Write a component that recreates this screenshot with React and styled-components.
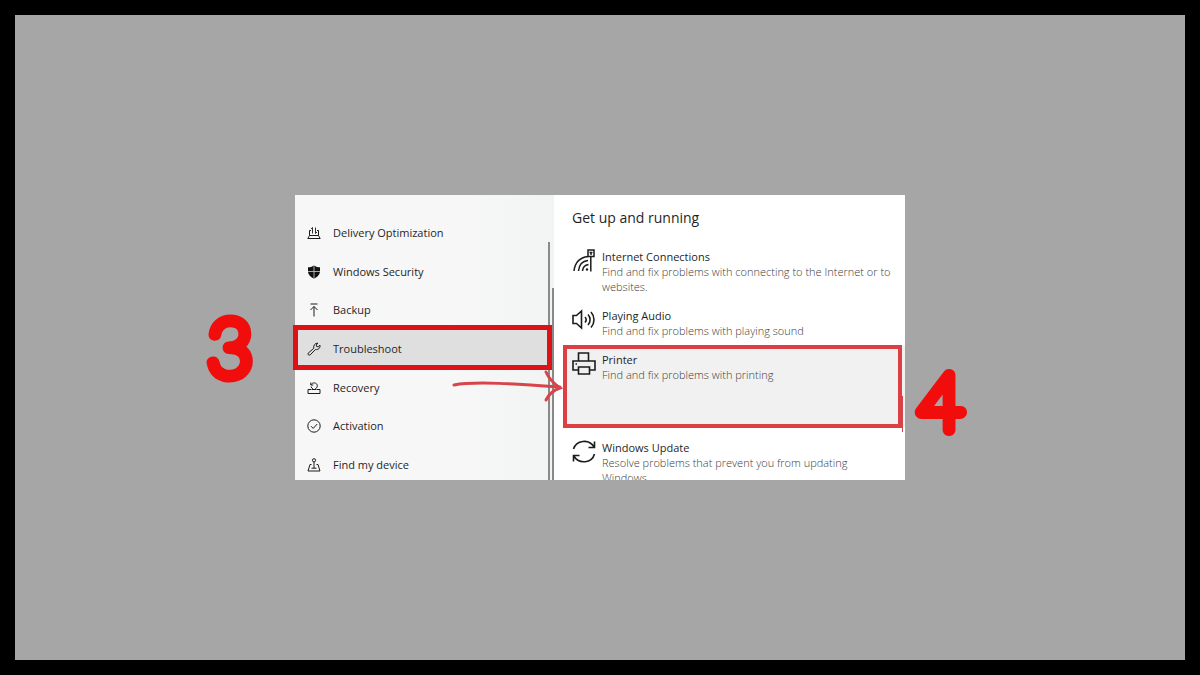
import React from 'react';
import styled, { createGlobalStyle } from 'styled-components';

const GlobalStyle = createGlobalStyle`
  * {
    box-sizing: border-box;
  }

  body {
    margin: 0;
    font-family: 'Open Sans', 'Noto Sans', sans-serif;
    color: #1f1f1f;
  }
`;

const Frame = styled.main`
  min-height: 100vh;
  display: flex;
  align-items: center;
  justify-content: center;
  border: 15px solid #000;
  background: #a6a6a6;
`;

const Figure = styled.div`
  position: relative;
  width: 100%;
  max-width: 610px;
  aspect-ratio: 610 / 285;
`;

const Settings = styled.div`
  display: grid;
  grid-template-columns: minmax(0, 259px) minmax(0, 1fr);
  grid-template-rows: minmax(0, 1fr);
  height: 100%;
  overflow: hidden;
  background: #fff;
`;

const Sidebar = styled.nav`
  display: flex;
  position: relative;
  padding-top: 19px;
  background: linear-gradient(90deg, #f7f7f7 60%, #f2f4f4);
`;

const NavList = styled.ul`
  flex: 1;
  display: grid;
  grid-template-rows: repeat(7, minmax(0, 1fr));
  margin: 0 0 -4px;
  padding: 0;
  list-style: none;
`;

const NavLink = styled.a`
  display: flex;
  align-items: center;
  gap: 12px;
  height: 100%;
  padding-left: 12px;
  font-size: 11px;
  line-height: 16px;
  color: #1f1f1f;
  text-decoration: none;
  background: ${({ $active }) => ($active ? '#dfdfdf' : 'transparent')};

  svg {
    width: 14px;
    height: 14px;
    flex: none;
  }
`;

const Rail = styled.span`
  position: absolute;
  top: ${({ $top }) => $top}px;
  right: ${({ $right }) => $right}px;
  bottom: 0;
  width: 2px;
  background: #8a8a8a;
`;

const Content = styled.section`
  padding: 12px 0 0 9px;
`;

const Title = styled.h1`
  margin: 0 0 13px;
  padding-left: 9px;
  font-size: 14px;
  line-height: 22px;
  font-weight: 400;
`;

const ToolList = styled.ul`
  display: grid;
  margin: 0;
  padding: 0;
  list-style: none;
`;

const ToolButton = styled.button`
  display: flex;
  align-items: flex-start;
  gap: 6px;
  width: 100%;
  min-height: ${({ $open }) => ($open ? '82px' : '0')};
  margin-bottom: ${({ $open }) => ($open ? '6px' : '0')};
  padding: 7px 12px 7px 9px;
  border: 0;
  font: inherit;
  font-size: 11px;
  font-weight: 300;
  line-height: 15px;
  text-align: left;
  color: #3c3c3c;
  background: ${({ $open }) => ($open ? '#f1f1f1' : 'transparent')};

  svg {
    width: 24px;
    height: 24px;
    flex: none;
  }
`;

const ToolName = styled.span`
  display: block;
  font-weight: 400;
  color: #1f1f1f;
`;

const Ring = styled.span`
  position: absolute;
  left: ${({ $left }) => $left}px;
  top: ${({ $top }) => $top}px;
  width: ${({ $width }) => $width}px;
  height: ${({ $height }) => $height}px;
  border: ${({ $line }) => $line}px solid ${({ $color }) => $color};
  pointer-events: none;
`;

const Arrow = styled.svg`
  position: absolute;
  left: 157px;
  top: 174px;
  width: 112px;
  height: 36px;
`;

const ScrollMark = styled.span`
  position: absolute;
  top: 201px;
  right: 2px;
  width: 1px;
  height: 36px;
  background: #c9494c;
`;

const Step = styled.svg`
  position: absolute;
  top: ${({ $top }) => $top}px;
  left: ${({ $left }) => $left}px;
  width: 72px;
  height: 84px;
  overflow: visible;

  text {
    font-family: Lato, sans-serif;
    font-size: 78px;
    font-weight: 100;
    text-anchor: middle;
    fill: #f20d0d;
    stroke: #f20d0d;
    stroke-width: 12px;
    stroke-linejoin: round;
  }
`;

const Icon = ({ size = 14, line = 1, children }) => (
  <svg
    viewBox={`0 0 ${size} ${size}`}
    fill="none"
    stroke="#1c1c1c"
    strokeWidth={line}
    aria-hidden="true"
  >
    {children}
  </svg>
);

const navItems = [
  {
    label: 'Delivery Optimization',
    icon: (
      <Icon>
        <path d="M4 4.500H2.500V9.500M10 4.500h1.500V9.500M2.500 9.500h9l1.700 3H.8z" />
        <path d="M5.500 7.500V1.500M4 3L5.500 1.500M8.500 1.500v6M8.500 7.500L10 6" strokeWidth=".9" />
      </Icon>
    ),
  },
  {
    label: 'Windows Security',
    icon: (
      <Icon>
        <path d="M7 .5c2 1.300 4 1.800 6 1.800v3.700c0 3.500-2.500 6-6 7.500-3.500-1.500-6-4-6-7.500V2.300c2 0 4-.5 6-1.800z" fill="#111" stroke="none" />
        <path d="M7 1v12M1 6.500h12" stroke="#bbb" strokeWidth=".9" />
      </Icon>
    ),
  },
  {
    label: 'Backup',
    icon: (
      <Icon>
        <path d="M3.500 1h7M7 13.500V3.500M3.500 7L7 3.500 10.500 7" />
      </Icon>
    ),
  },
  {
    label: 'Troubleshoot',
    active: true,
    icon: (
      <Icon>
        <path d="M1.200 11.200L6.800 6.200C6.200 3.500 8 1 10.800 1.100L9.300 3l.4 1.500 1.600.3L13 3.200c.5 2.800-2 5-4.600 4.300l-5.200 5.400c-1.300.9-2.900-.5-2-1.700z" />
      </Icon>
    ),
  },
  {
    label: 'Recovery',
    icon: (
      <Icon>
        <path d="M4.500 8.500H1v4h12v-4H9.500M5 8.500h4" />
        <path d="M3.800 1.500V4h2.500M4 3.800c1.500-3 6.300-2.300 6.300 1 0 1.700-1 2.700-2.300 3.200M4 5.500C4.200 6.700 5 7.500 6 8" />
      </Icon>
    ),
  },
  {
    label: 'Activation',
    icon: (
      <Icon>
        <circle cx="7" cy="7" r="6.200" />
        <path d="M4 7.200l2.200 2.200L10.200 5" />
      </Icon>
    ),
  },
  {
    label: 'Find my device',
    icon: (
      <Icon>
        <circle cx="7" cy="2.300" r="1.600" />
        <path d="M7 4v6M4.500 6.500H3L1 13h12l-2-6.500H9.500M4.500 10.200h5" />
      </Icon>
    ),
  },
];

const tools = [
  {
    name: 'Internet Connections',
    text: 'Find and fix problems with connecting to the Internet or to websites.',
    icon: (
      <Icon size={24} line={1.5}>
        <path d="M2 22C3 13 8 8.500 16 7.500M6.500 22c.5-6 4-10 9.500-10.500M10.500 22c.3-3.500 2.500-6 6-6.500M18.800 22.500V7" />
        <circle cx="15" cy="20.500" r="1.200" fill="#1c1c1c" stroke="none" />
        <path d="M16 1h6v6.500h-6zM17.500 3.500h3M19 3.500v2.500" />
      </Icon>
    ),
  },
  {
    name: 'Playing Audio',
    text: 'Find and fix problems with playing sound',
    icon: (
      <Icon size={24} line={1.6}>
        <path d="M1 7.500h3.500L9.500 3v17l-5-4.500H1zM13 9c1.300 1.500 1.300 4 0 5.500M16 6.500c2.800 3 2.800 7.500 0 10.500M19 4c4 4.500 4 11 0 15.500" />
      </Icon>
    ),
  },
  {
    name: 'Printer',
    text: 'Find and fix problems with printing',
    open: true,
    icon: (
      <Icon size={24} line={1.6}>
        <path d="M6.500 9V1h10v8M6.500 18H1V9h22v9h-5.500M6.500 15h11v7h-11zM3.500 12h1.500" />
      </Icon>
    ),
  },
  {
    name: 'Windows Update',
    text: 'Resolve problems that prevent you from updating Windows.',
    icon: (
      <Icon size={24} line={1.6}>
        <path d="M1.500 9C4 .5 17-2 22.500 7.500M22.500 1.500v6h-6M22.500 14C20 23 7 25 1.500 15.500M1.500 21.500v-6h6" />
      </Icon>
    ),
  },
];

const App = () => (
  <>
    <GlobalStyle />
    <Frame>
      <Figure>
        <Settings>
          <Sidebar>
            <NavList>
              {navItems.map(({ label, icon, active }) => (
                <li key={label}>
                  <NavLink href="#" $active={active}>
                    {icon}
                    {label}
                  </NavLink>
                </li>
              ))}
            </NavList>
            <Rail $top={47} $right={4} />
            <Rail $top={93} $right={0} />
          </Sidebar>
          <Content>
            <Title>Get up and running</Title>
            <ToolList>
              {tools.map(({ name, text, icon, open }) => (
                <li key={name}>
                  <ToolButton type="button" $open={open}>
                    {icon}
                    <span>
                      <ToolName>{name}</ToolName>
                      {text}
                    </span>
                  </ToolButton>
                </li>
              ))}
            </ToolList>
          </Content>
        </Settings>
        <Ring $left={-2} $top={130} $width={259} $height={45} $line={5} $color="#dc1216" />
        <Ring $left={268} $top={150} $width={339} $height={83} $line={4} $color="#dc4044" />
        <ScrollMark />
        <Arrow viewBox="0 0 112 36" fill="none" stroke="#d8444a" strokeLinecap="round" aria-hidden="true">
          <path d="M2 16C22 12 66 15 108 18" strokeWidth="3" />
          <path d="M94 3c3 7 7 11 14 16-6 2-11 6-14 12" strokeWidth="3" />
        </Arrow>
        <Step $left={-101} $top={113}>
          <text x="36" y="68">3</text>
        </Step>
        <Step $left={610} $top={167}>
          <text x="36" y="68">4</text>
        </Step>
      </Figure>
    </Frame>
  </>
);

export default App;
